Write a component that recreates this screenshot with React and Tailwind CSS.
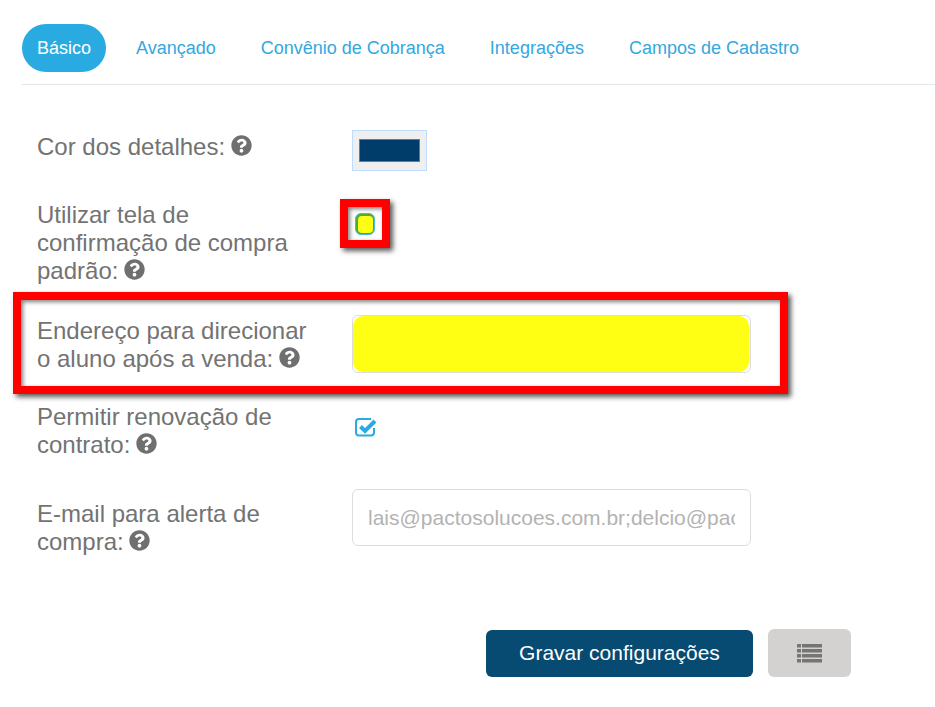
import React from "react";
import { FaQuestionCircle } from "react-icons/fa";

const Help = ({ cls = "" }) => (
  <FaQuestionCircle className={"inline-block w-[21px] h-[21px] text-[#6f6f6f] align-[-1px] ml-[-1px] " + cls} />
);

function Row({ mt, children, control }) {
  return (
    <div className={"flex items-start " + mt}>
      <div className="w-[315px] shrink-0 text-[24px] leading-[28px] text-[#737373]">{children}</div>
      {control}
    </div>
  );
}

const Tab = ({ children, active }) =>
  active ? (
    <div className="h-12 w-[84px] rounded-[24px] bg-[#29abe2] text-white flex items-center justify-center">{children}</div>
  ) : (
    <div className="text-[#34a8e0]">{children}</div>
  );

const CheckIcon = () => (
  <svg viewBox="0 0 23 20" className="ml-[3px] mt-[14px] h-5 w-[23px]" fill="none">
    <path d="M19 11v4.5a3 3 0 0 1-3 3H4a3 3 0 0 1-3-3V5a3 3 0 0 1 3-3h12" stroke="#29abe2" strokeWidth="2" />
    <path d="M5.5 9.5l4.5 4.5 10-10" stroke="#29abe2" strokeWidth="4" strokeLinejoin="miter" />
  </svg>
);

const ListIcon = () => (
  <svg viewBox="0 0 25 19" className="h-[19px] w-[25px]" fill="#757575">
    <rect x="0" y="0" width="4" height="3.5" />
    <rect x="5" y="0" width="20" height="3.5" />
    <rect x="0" y="5" width="4" height="3.5" />
    <rect x="5" y="5" width="20" height="3.5" />
    <rect x="0" y="10" width="4" height="3.5" />
    <rect x="5" y="10" width="20" height="3.5" />
    <rect x="0" y="15" width="4" height="3.5" />
    <rect x="5" y="15" width="20" height="3.5" />
  </svg>
);

export default function App() {
  return (
    <div className="relative h-[707px] w-[935px] overflow-hidden bg-white [font-family:'Liberation_Sans',Arial,sans-serif]">
      <div className="ml-[22px] pt-6">
        <div className="flex items-center gap-[45px] h-12 text-[18px]">
          <div className="mr-[-15px]"><Tab active>Básico</Tab></div>
          <Tab>Avançado</Tab>
          <Tab>Convênio de Cobrança</Tab>
          <Tab>Integrações</Tab>
          <Tab>Campos de Cadastro</Tab>
        </div>
        <div className="mt-3 h-px bg-[#e4e7ea]" />
      </div>

      <div className="pl-[37px] mt-12">
        <Row
          mt=""
          control={
            <div className="-mt-[3px] h-[41px] w-[75px] border border-[#bfdbfe] bg-[#efefef] flex items-center justify-center">
              <div className="h-[23px] w-[61px] border border-[#767676] bg-[#003d6b]" />
            </div>
          }
        >
          Cor dos detalhes: <Help />
        </Row>
        <Row
          mt="mt-[30px]"
          control={
            <div className="ml-[3px] mt-[12px] h-[22px] w-5 rounded-[6px] border border-[#4db5ea] bg-[#4fae2a] p-[1.5px]">
              <div className="h-full w-full rounded-[4px] bg-[#ffff14]" />
            </div>
          }
        >
          Utilizar tela de<br />confirmação de compra<br />padrão: <Help />
        </Row>
        <Row
          mt="mt-8"
          control={
            <div className="-mt-[2px] h-[58px] w-[399px] rounded-md border border-[#dddddd]">
              <div className="h-full w-[396px] rounded-[10px] bg-[#ffff14]" />
            </div>
          }
        >
          Endereço para direcionar<br />o aluno após a venda: <Help />
        </Row>
        <Row mt="mt-[30px]" control={<CheckIcon />}>
          Permitir renovação de<br />contrato: <Help />
        </Row>
        <Row
          mt="mt-[41px]"
          control={
            <input
              readOnly
              placeholder="lais@pactosolucoes.com.br;delcio@pactosolucoes.com.br"
              className="-mt-[11px] h-[57px] w-[399px] rounded-md border border-[#dddddd] px-[15px] text-[21px] outline-none placeholder:text-[#b3b3b3]"
            />
          }
        >
          E-mail para alerta de<br />compra: <Help />
        </Row>
      </div>

      <div className="mt-[73px] ml-[486px] flex items-center gap-[15px]">
        <div className="h-[47px] w-[267px] rounded-md bg-[#074a72] text-white text-[21px] flex items-center justify-center">
          Gravar configurações
        </div>
        <div className="h-12 w-[83px] rounded-md bg-[#d3d2d1] flex items-center justify-center">
          <ListIcon />
        </div>
      </div>

      <div className="absolute left-[340px] top-[199px] h-[49px] w-[50px] border-[8px] border-[#ff0000] shadow-[3px_3px_5px_rgba(0,0,0,0.65),inset_2px_2px_4px_rgba(0,0,0,0.5)]" />
      <div className="absolute left-[13px] top-[292px] h-[102px] w-[775px] border-[8px] border-[#ff0000] shadow-[3px_3px_5px_rgba(0,0,0,0.65),inset_2px_2px_4px_rgba(0,0,0,0.5)]" />
    </div>
  );
}
